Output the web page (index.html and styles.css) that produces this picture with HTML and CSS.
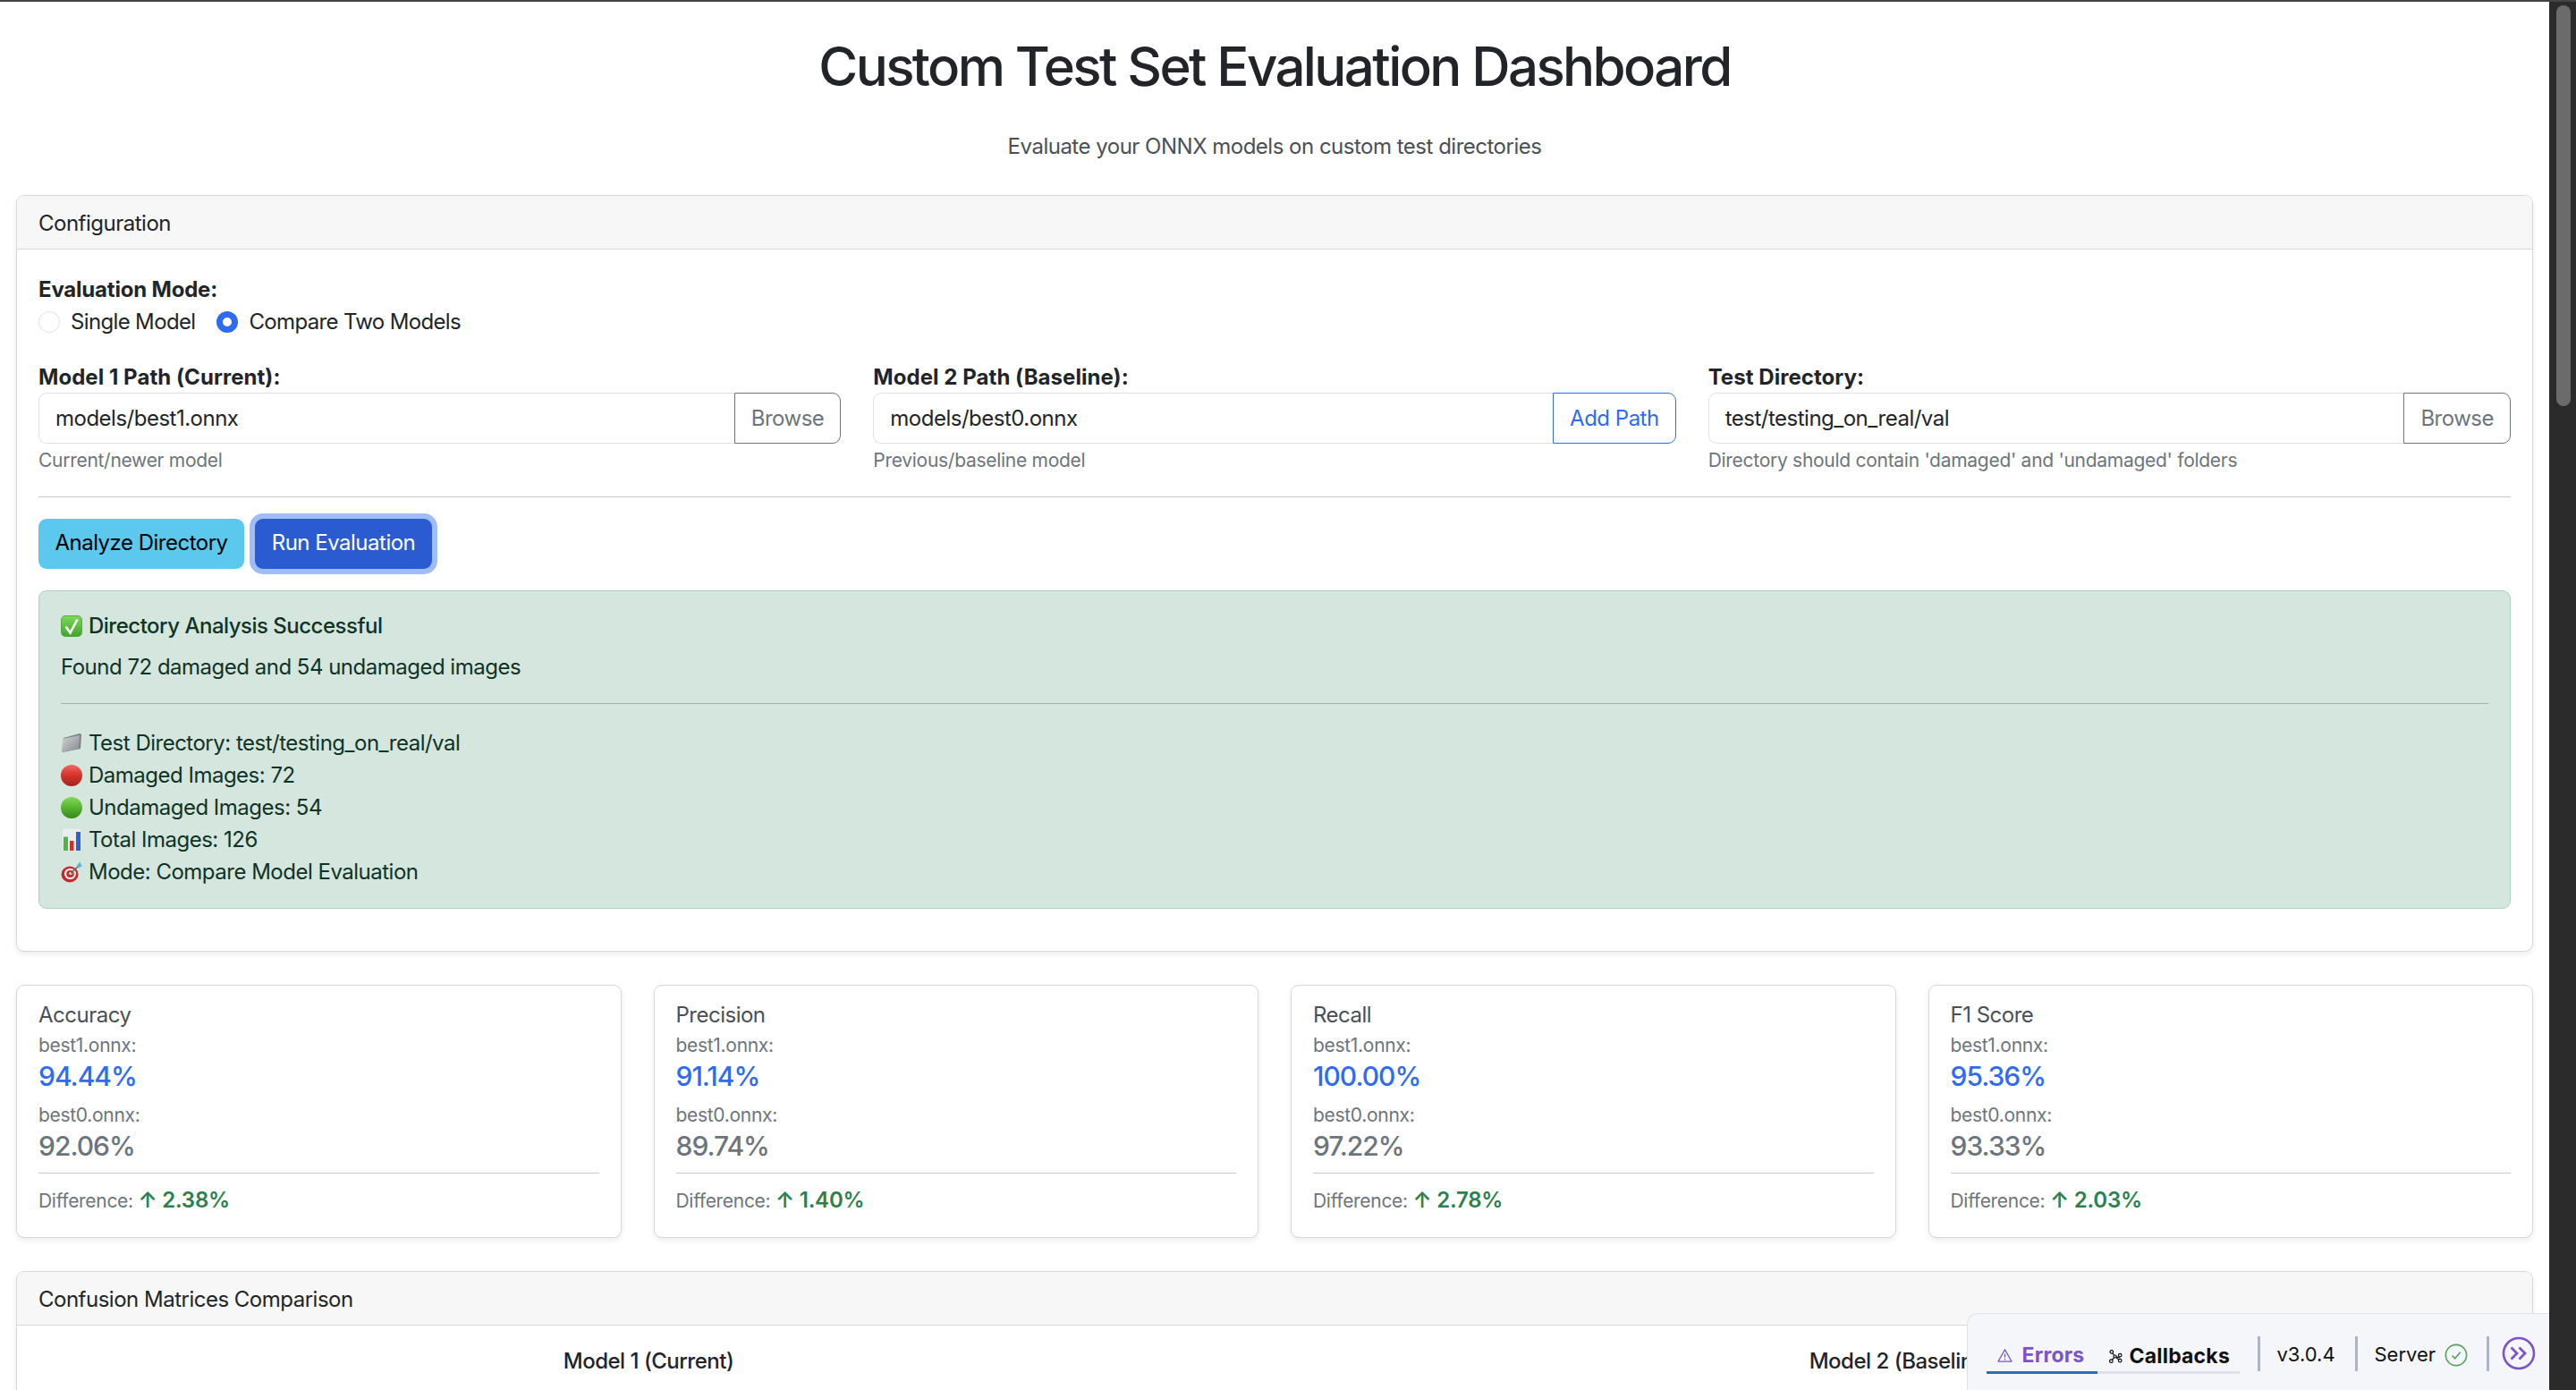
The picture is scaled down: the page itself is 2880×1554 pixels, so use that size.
FILE: index.html
```html
<!DOCTYPE html>
<html lang="en">
<head>
    <meta charset="UTF-8">
    <title>Custom Test Set Evaluation Dashboard</title>
    <link rel="stylesheet" href="styles.css">
</head>
<body>

<div class="window">
    <div class="page">
        <h1 class="title">Custom Test Set Evaluation Dashboard</h1>
        <p class="subtitle">Evaluate your ONNX models on custom test directories</p>

        <!-- Configuration -->
        <div class="card config-card">
            <div class="card-header">Configuration</div>
            <div class="card-body">
                <div class="field-label">Evaluation Mode:</div>
                <div class="radio-row">
                    <span class="radio"></span><span class="radio-text">Single Model</span>
                    <span class="radio radio-on"></span><span class="radio-text">Compare Two Models</span>
                </div>

                <div class="path-row">
                    <div class="path-col">
                        <div class="field-label path-label">Model 1 Path (Current):</div>
                        <div class="input-group">
                            <div class="input">models/best1.onnx</div>
                            <div class="group-btn btn-grey">Browse</div>
                        </div>
                        <div class="hint">Current/newer model</div>
                    </div>
                    <div class="path-col">
                        <div class="field-label path-label">Model 2 Path (Baseline):</div>
                        <div class="input-group">
                            <div class="input">models/best0.onnx</div>
                            <div class="group-btn btn-blue">Add Path</div>
                        </div>
                        <div class="hint">Previous/baseline model</div>
                    </div>
                    <div class="path-col">
                        <div class="field-label path-label">Test Directory:</div>
                        <div class="input-group">
                            <div class="input">test/testing_on_real/val</div>
                            <div class="group-btn btn-grey">Browse</div>
                        </div>
                        <div class="hint">Directory should contain 'damaged' and 'undamaged' folders</div>
                    </div>
                </div>

                <hr class="rule config-rule">

                <div class="action-row">
                    <div class="btn btn-info">Analyze Directory</div>
                    <div class="btn btn-primary">Run Evaluation</div>
                </div>

                <div class="alert">
                    <div class="alert-title">
                        <svg class="emoji" viewBox="0 0 24 24">
                            <defs><linearGradient id="checkFill" x1="0" y1="0" x2="0" y2="1"><stop offset="0" stop-color="#7ed957"/><stop offset="1" stop-color="#3fa52c"/></linearGradient></defs>
                            <rect x="0.5" y="0.5" width="23" height="23" rx="4.5" fill="url(#checkFill)" stroke="#4a9c38" stroke-width="0.8"/>
                            <path d="M5.5 12.5l5 7L18.5 4.5" fill="none" stroke="#fff" stroke-width="2.6"/>
                        </svg>
                        Directory Analysis Successful
                    </div>
                    <div class="alert-found">Found 72 damaged and 54 undamaged images</div>
                    <hr class="rule alert-rule">
                    <div class="alert-line">
                        <svg class="emoji" viewBox="0 0 24 24">
                            <defs><linearGradient id="folderFill" x1="0" y1="0" x2="1" y2="1"><stop offset="0" stop-color="#d2d4d6"/><stop offset="1" stop-color="#85898e"/></linearGradient></defs>
                            <path d="M3 6l18-5 2 1-1 16-20 4z" fill="#7c8086"/>
                            <path d="M2 7l19-4-1 15-19 4z" fill="url(#folderFill)"/>
                        </svg>
                        Test Directory: test/testing_on_real/val
                    </div>
                    <div class="alert-line">
                        <svg class="emoji" viewBox="0 0 24 24">
                            <defs><linearGradient id="redFill" x1="0" y1="0" x2="0" y2="1"><stop offset="0" stop-color="#ee6a62"/><stop offset="0.45" stop-color="#d9362e"/><stop offset="1" stop-color="#a3241d"/></linearGradient></defs>
                            <circle cx="12" cy="12" r="12" fill="url(#redFill)"/>
                        </svg>
                        Damaged Images: 72
                    </div>
                    <div class="alert-line">
                        <svg class="emoji" viewBox="0 0 24 24">
                            <defs><linearGradient id="greenFill" x1="0" y1="0" x2="0" y2="1"><stop offset="0" stop-color="#84d85a"/><stop offset="0.5" stop-color="#56b52f"/><stop offset="1" stop-color="#35881b"/></linearGradient></defs>
                            <circle cx="12" cy="12" r="12" fill="url(#greenFill)"/>
                        </svg>
                        Undamaged Images: 54
                    </div>
                    <div class="alert-line">
                        <svg class="emoji" viewBox="0 0 24 24">
                            <rect x="2" y="0" width="20" height="24" fill="#e9edf0"/>
                            <rect x="3" y="8.5" width="5" height="15.5" fill="#4cb83e"/>
                            <rect x="10" y="13" width="4.5" height="11" fill="#c8332b"/>
                            <rect x="17" y="3" width="5" height="21" fill="#2f63c4"/>
                        </svg>
                        Total Images: 126
                    </div>
                    <div class="alert-line">
                        <svg class="emoji" viewBox="0 0 24 24">
                            <ellipse cx="10" cy="14.5" rx="9.5" ry="9" fill="#c42a2a"/>
                            <ellipse cx="10.5" cy="14" rx="6.5" ry="6.2" fill="#f1e9e6"/>
                            <ellipse cx="10.5" cy="14" rx="4.2" ry="4" fill="#c42a2a"/>
                            <ellipse cx="11" cy="13.5" rx="1.8" ry="1.7" fill="#f1e9e6"/>
                            <path d="M11 13.5L20 5" stroke="#556b75" stroke-width="1.5"/>
                            <path d="M18 4.5L21.5 0.5 22.5 3.5 24 5 20 7.5z" fill="#5fb4d6"/>
                        </svg>
                        Mode: Compare Model Evaluation
                    </div>
                </div>
            </div>
        </div>

        <!-- Metrics -->
        <div class="metric-row">
            <div class="card metric-card">
                <div class="metric-name">Accuracy</div>
                <div class="metric-model">best1.onnx:</div>
                <div class="metric-value value-new">94.44%</div>
                <div class="metric-model model-old">best0.onnx:</div>
                <div class="metric-value value-old">92.06%</div>
                <hr class="rule metric-rule">
                <div class="metric-diff">Difference: <span class="diff-up">↑ 2.38%</span></div>
            </div>
            <div class="card metric-card">
                <div class="metric-name">Precision</div>
                <div class="metric-model">best1.onnx:</div>
                <div class="metric-value value-new">91.14%</div>
                <div class="metric-model model-old">best0.onnx:</div>
                <div class="metric-value value-old">89.74%</div>
                <hr class="rule metric-rule">
                <div class="metric-diff">Difference: <span class="diff-up">↑ 1.40%</span></div>
            </div>
            <div class="card metric-card">
                <div class="metric-name">Recall</div>
                <div class="metric-model">best1.onnx:</div>
                <div class="metric-value value-new">100.00%</div>
                <div class="metric-model model-old">best0.onnx:</div>
                <div class="metric-value value-old">97.22%</div>
                <hr class="rule metric-rule">
                <div class="metric-diff">Difference: <span class="diff-up">↑ 2.78%</span></div>
            </div>
            <div class="card metric-card">
                <div class="metric-name">F1 Score</div>
                <div class="metric-model">best1.onnx:</div>
                <div class="metric-value value-new">95.36%</div>
                <div class="metric-model model-old">best0.onnx:</div>
                <div class="metric-value value-old">93.33%</div>
                <hr class="rule metric-rule">
                <div class="metric-diff">Difference: <span class="diff-up">↑ 2.03%</span></div>
            </div>
        </div>

        <!-- Confusion matrices, cut off by the window -->
        <div class="card matrix-card">
            <div class="card-header">Confusion Matrices Comparison</div>
            <div class="matrix-row">
                <div class="matrix-col">Model 1 (Current)</div>
                <div class="matrix-col">Model 2 (Baseline)</div>
            </div>
        </div>
    </div>

    <div class="scrollbar"><div class="scroll-thumb"></div></div>
</div>

<!-- Dash debug toolbar -->
<div class="debug-bar">
    <div class="debug-tabs">
        <div class="debug-tab tab-active">
            <svg class="tab-icon" viewBox="0 0 18 18"><path d="M9 2L17 16H1z" fill="none" stroke="#7b55c7" stroke-width="1.3" stroke-linejoin="round"/><path d="M9 7v4.5M9 12.8v1.5" stroke="#7b55c7" stroke-width="1.4"/></svg>
            Errors
        </div>
        <div class="debug-tab tab-callbacks">
            <svg class="tab-icon" viewBox="0 0 16 16"><path d="M3 2.5l4 5.5 6 1.5M7 8l-4.5 5.5M7 8l6 5" fill="none" stroke="#111" stroke-width="1.3"/><circle cx="3" cy="2.5" r="1.9" fill="#f5f6fa" stroke="#111" stroke-width="1.3"/><circle cx="13" cy="6.5" r="1.9" fill="#f5f6fa" stroke="#111" stroke-width="1.3"/><circle cx="7" cy="8" r="1.6" fill="#f5f6fa" stroke="#111" stroke-width="1.3"/><circle cx="2.5" cy="13.5" r="1.9" fill="#f5f6fa" stroke="#111" stroke-width="1.3"/><circle cx="13" cy="13" r="1.9" fill="#f5f6fa" stroke="#111" stroke-width="1.3"/></svg>
            Callbacks
        </div>
    </div>
    <div class="debug-item debug-version">v3.0.4</div>
    <div class="debug-item debug-server">
        Server
        <svg class="server-icon" viewBox="0 0 26 26"><circle cx="13" cy="13" r="11.6" fill="none" stroke="#55a05a" stroke-width="1.6"/><path d="M8.5 13.5l3.2 3.2 6-7" fill="none" stroke="#55a05a" stroke-width="1.6"/></svg>
    </div>
    <div class="debug-toggle">
        <svg class="toggle-icon" viewBox="0 0 38 38"><circle cx="19" cy="19" r="17" fill="none" stroke="#7b55c7" stroke-width="2.6"/><path d="M10.5 12.5l6.5 6.5-6.5 6.5M19.5 12.5l6.5 6.5-6.5 6.5" fill="none" stroke="#7b55c7" stroke-width="2.8"/></svg>
    </div>
</div>

</body>
</html>
```

FILE: styles.css
```css
html, body {
    margin: 0;
    padding: 0;
    height: 100%;
    overflow: hidden;
    background-color: #fff;
    color: #212529;
    font-family: Inter, "Liberation Sans", sans-serif;
    font-size: 24px;
    line-height: 36px;
    letter-spacing: -0.5px;
}

.window {
    display: flex;
    height: 1552px;
    border-top: 2px solid #444;
}

.page {
    flex: 1;
    min-width: 0;
    padding: 0 18px;
}

.scrollbar {
    box-sizing: border-box;
    width: 30px;
    padding: 4px 6px 0 8px;
    flex-shrink: 0;
    background-color: #2b2b2b;
}

.scroll-thumb {
    width: 16px;
    height: 448px;
    border-radius: 8px;
    background-color: #6b6b6b;
}

/* Heading */
.title {
    margin: 0;
    padding-top: 36px;
    text-align: center;
    font-size: 60px;
    line-height: 72px;
    font-weight: 500;
    letter-spacing: -2.6px;
}

.subtitle {
    margin: 36px 0 0;
    text-align: center;
    color: #495057;
}

/* Cards */
.card {
    box-sizing: border-box;
    background-color: #fff;
    border: 1.5px solid #d6d7d9;
    border-radius: 9px;
    box-shadow: 0 3px 6px rgba(0, 0, 0, 0.08);
}

.config-card {
    margin-top: 36px;
    height: 846px;
}

.card-header {
    box-sizing: border-box;
    height: 60px;
    padding: 13px 24px;
    background-color: #f7f7f7;
    border-bottom: 1.5px solid #d6d7d9;
    border-radius: 8px 8px 0 0;
}

.card-body {
    padding: 27px 24px 0;
}

.field-label {
    font-weight: 700;
    letter-spacing: -0.2px;
}

.path-label {
    letter-spacing: 0.05px;
}

.radio-row {
    display: flex;
    align-items: center;
    height: 36px;
}

.radio {
    box-sizing: border-box;
    width: 24px;
    height: 24px;
    border: 1.5px solid #dee2e6;
    border-radius: 50%;
    margin-right: 12px;
}

.radio-on {
    border: 7px solid #2f6bf0;
}

.radio-text {
    margin-right: 24px;
    letter-spacing: -0.65px;
}

.path-row {
    display: flex;
    gap: 36px;
    margin-top: 26px;
}

.path-col {
    flex: 1;
    min-width: 0;
}

.input-group {
    display: flex;
    height: 57px;
    margin-top: -1px;
}

.input {
    flex: 1;
    box-sizing: border-box;
    padding: 10px 18px 8px;
    border: 1.5px solid #dee2e6;
    border-right: 0;
    border-radius: 9px 0 0 9px;
}

.group-btn {
    box-sizing: border-box;
    padding: 10px 18px 8px;
    border: 1.5px solid;
    border-radius: 0 9px 9px 0;
}

.btn-grey {
    color: #6c757d;
    border-color: #6c757d;
}

.btn-blue {
    color: #2f6bf0;
    border-color: #2f6bf0;
}

.hint {
    margin-top: 3px;
    color: #6c757d;
    font-size: 21px;
    line-height: 32px;
    letter-spacing: -0.28px;
}

.rule {
    margin: 0;
    border: 0;
    border-top: 1.5px solid #c8c9cb;
}

.config-rule {
    margin-top: 24px;
}

.action-row {
    display: flex;
    gap: 12px;
    margin-top: 24px;
}

.btn {
    box-sizing: border-box;
    display: flex;
    justify-content: center;
    height: 56px;
    padding-top: 9px;
    border-radius: 9px;
    white-space: nowrap;
}

.btn-info {
    width: 230px;
    background-color: #5cc8ee;
    color: #000;
}

.btn-primary {
    width: 198px;
    background-color: #2a5bd0;
    color: #fff;
    box-shadow: 0 0 0 6px #a0bdf9;
}

.alert {
    box-sizing: border-box;
    height: 356px;
    margin-top: 24px;
    padding: 21px 24px;
    background-color: #d5e6de;
    border: 1.5px solid #a9d2bd;
    border-radius: 9px;
    color: #0f3324;
}

.alert-title {
    display: flex;
    align-items: center;
    font-weight: 500;
}

.alert-found {
    margin-top: 10px;
}

.alert-rule {
    margin: 22px 0 26px;
    border-top-color: #a1b5aa;
}

.alert-line {
    display: flex;
    align-items: center;
}

.emoji {
    width: 24px;
    height: 24px;
    margin-right: 7px;
    flex-shrink: 0;
}

/* Metrics */
.metric-row {
    display: flex;
    gap: 36px;
    margin-top: 37px;
}

.metric-card {
    flex: 1;
    min-width: 0;
    height: 283px;
    padding: 14.5px 24px;
}

.metric-name {
    color: #495057;
}

.metric-model {
    color: #6c757d;
    font-size: 21px;
    line-height: 32px;
    letter-spacing: -0.3px;
}

.model-old {
    margin-top: 10px;
}

.metric-value {
    font-size: 30px;
    line-height: 36px;
    font-weight: 500;
    letter-spacing: -1px;
}

.value-new {
    color: #2f6bf0;
}

.value-old {
    color: #6c757d;
}

.metric-rule {
    margin: 12px 0 12.5px;
}

.metric-diff {
    color: #6c757d;
    font-size: 21px;
    letter-spacing: -0.3px;
}

.diff-up {
    color: #2c8050;
    font-size: 24px;
    font-weight: 600;
    letter-spacing: -0.2px;
}

/* Confusion matrices */
.matrix-card {
    margin-top: 37px;
}

.matrix-row {
    display: flex;
    gap: 36px;
    padding: 22px 24px;
}

.matrix-col {
    flex: 1;
    text-align: center;
    font-weight: 500;
}

/* Debug toolbar */
.debug-bar {
    position: fixed;
    left: 2198.5px;
    right: 30px;
    top: 1468px;
    bottom: 0;
    box-sizing: border-box;
    display: flex;
    align-items: flex-start;
    padding: 24.5px 0 0 21px;
    background-color: #f5f6fa;
    border: 1.5px solid #dfe1ee;
    border-right: 0;
    border-bottom: 0;
    border-radius: 12px 0 0 0;
    color: #111;
    font-size: 22px;
    line-height: 39px;
    letter-spacing: 0;
}

.debug-tabs {
    display: flex;
    height: 42px;
    box-sizing: border-box;
    border-bottom: 3px solid #dfe1ee;
    width: 283px;
}

.debug-tab {
    display: flex;
    align-items: center;
    height: 42px;
    box-sizing: border-box;
    padding: 5px 0 1px 12px;
    font-size: 23px;
    font-weight: 700;
    letter-spacing: 0.2px;
}

.tab-active {
    width: 124px;
    color: #7b55c7;
    border-bottom: 3px solid #2a6cbb;
}

.tab-icon {
    width: 17px;
    height: 17px;
    margin-right: 11px;
}

.tab-callbacks {
    padding-left: 13px;
}

.tab-callbacks .tab-icon {
    width: 15px;
    height: 15px;
    margin-right: 8px;
}

.debug-item {
    display: flex;
    align-items: center;
    height: 39px;
    box-sizing: border-box;
    padding-top: 3px;
    border-left: 3px solid #adb3cf;
}

.debug-version {
    margin-left: 20px;
    width: 109px;
    padding-left: 19px;
}

.debug-server {
    width: 150px;
    padding-left: 19px;
    border-right: 3px solid #adb3cf;
}

.server-icon {
    width: 26px;
    height: 26px;
    margin-left: 10px;
}

.debug-toggle {
    margin-left: 14px;
    height: 39px;
}

.toggle-icon {
    display: block;
    width: 38px;
    height: 38px;
}
```
